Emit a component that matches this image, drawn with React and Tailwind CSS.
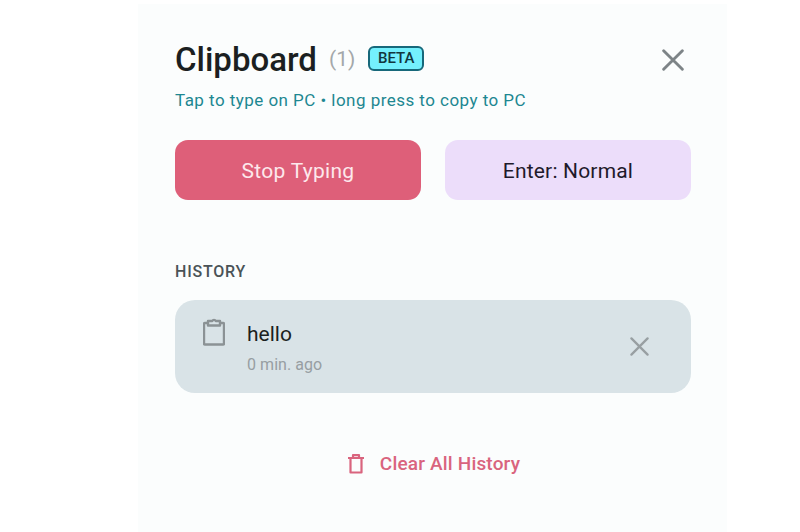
import React from "react";

function XIcon({ size, color, width }) {
  return (
    <svg width={size} height={size} viewBox="0 0 20 20" fill="none" stroke={color} strokeWidth={width} strokeLinecap="round">
      <path d="M1.5 1.5L18.5 18.5M18.5 1.5L1.5 18.5" />
    </svg>
  );
}

export default function App() {
  return (
    <div className="w-[800px] h-[532px] bg-white overflow-hidden font-['Roboto',sans-serif]">
      <div className="ml-[138px] mt-[4px] w-[589px] h-[528px] bg-[#fbfdfd] pl-[37px] pr-[36px] pt-[36px] flex flex-col">
        <div className="flex items-center h-[40px]">
          <span className="text-[33px] leading-[40px] font-medium text-[#1b1f21]">Clipboard</span>
          <span className="ml-[12px] text-[21px] text-[#a3a8aa]">(1)</span>
          <span className="ml-[13px] mb-[4px] w-[56px] h-[25px] flex items-center justify-center rounded-[6px] border-2 border-[#17687a] bg-[#74f0fd] text-[15px] font-medium text-[#12363e]">BETA</span>
          <span className="ml-auto mr-[7px] flex"><XIcon size={22} color="#7d8487" width={2.6} /></span>
        </div>
        <div className="mt-[10px] text-[17px] leading-[20px] tracking-[0.46px] text-[#1d8791]">Tap to type on PC • long press to copy to PC</div>
        <div className="mt-[30px] grid grid-cols-2 gap-[24px]">
          <div className="h-[60px] pt-[4px] rounded-[13px] bg-[#de5f79] flex items-center justify-center text-[21px] tracking-[0.28px] text-[#fde8ec]">Stop Typing</div>
          <div className="h-[60px] pt-[4px] rounded-[13px] bg-[#ecddfa] flex items-center justify-center text-[21px] tracking-[0.18px] text-[#1f1a2a]">Enter: Normal</div>
        </div>
        <div className="mt-[62px] text-[16px] leading-[20px] font-medium tracking-[0.8px] text-[#4a5357]">HISTORY</div>
        <div className="mt-[18px] h-[93px] rounded-[20px] bg-[#d9e3e7] flex items-start pl-[28px] pr-[42px]">
          <svg className="mt-[18px]" width="22" height="28" viewBox="0 0 22 28" fill="none" stroke="#8b9295" strokeWidth="2.4" strokeLinejoin="round">
            <path d="M5 5H2a1 1 0 0 0-1 1v19.5a1 1 0 0 0 1 1h18a1 1 0 0 0 1-1V6a1 1 0 0 0-1-1h-3" />
            <path d="M5 3h4.2a2 2 0 0 1 3.6 0H17v4.5H5z" />
          </svg>
          <div className="ml-[22px] flex flex-col">
            <span className="mt-[21px] text-[21px] leading-[26px] text-[#1b1f21]">hello</span>
            <span className="mt-[8px] text-[16px] leading-[20px] tracking-[0.05px] text-[#979ea2]">0 min. ago</span>
          </div>
          <span className="ml-auto mt-[37px] flex"><XIcon size={19} color="#989fa2" width={2.4} /></span>
        </div>
        <div className="mt-[57px] pl-[2px] flex items-center justify-center gap-[16px] text-[19px] font-medium tracking-[0.18px] text-[#d9647e]">
          <svg width="16" height="20" viewBox="0 0 16 20" fill="none" stroke="#d9647e" strokeWidth="2.2" strokeLinejoin="round">
            <path d="M0 4h16M5 3.5V1.2h6v2.3M2.5 4v14.5h11V4" />
          </svg>
          <span>Clear All History</span>
        </div>
      </div>
    </div>
  );
}
